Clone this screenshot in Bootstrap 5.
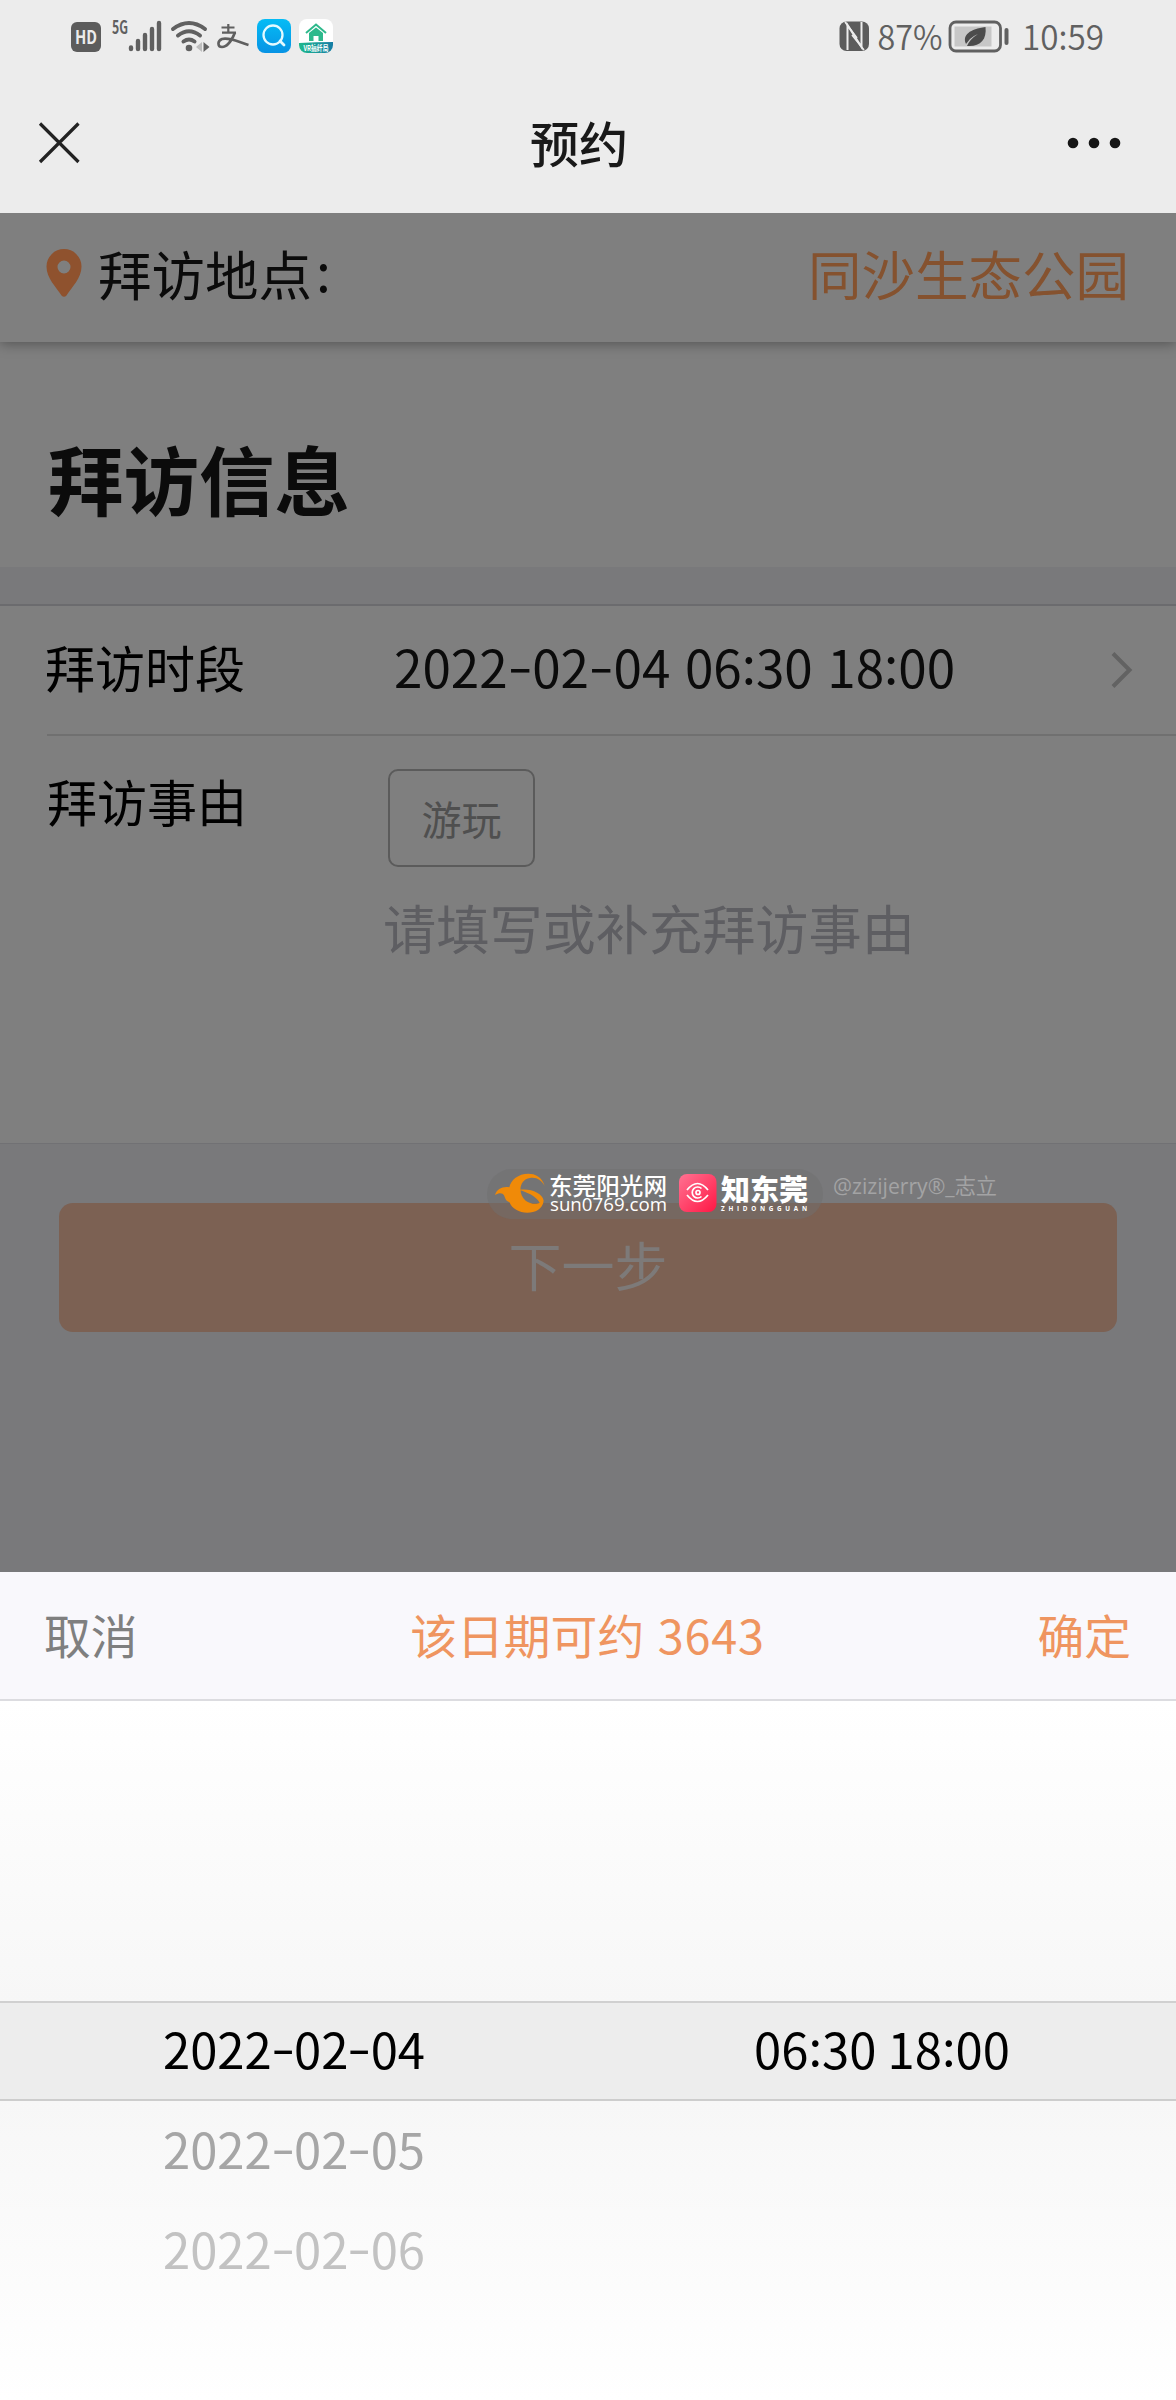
<!DOCTYPE html>
<html lang="zh-CN">
<head>
<meta charset="utf-8">
<meta name="viewport" content="width=device-width, initial-scale=1">
<title>预约</title>
<link rel="stylesheet" href="https://cdn.jsdelivr.net/npm/bootstrap@5.3.0/dist/css/bootstrap.min.css">
<style>
body{font-family:"Noto Sans CJK SC",sans-serif;color:#0b0b0b;background:#79797b;width:1176px;height:2400px;overflow:hidden;line-height:1}
.phone-status{height:72px;padding:0 71px 0 70px;color:#606060}
.app-head{height:141px;padding:0 55px 0 37px}
.top-area{background:#ececec;z-index:2}
.app-title{font-size:49px;font-weight:500;color:#191919;line-height:60px;padding:0 0 2px 10px}
.place-bar{height:129px;background:#7f7f7f;padding:0 47px 9px 46px;box-shadow:0 2px 12px rgba(0,0,0,.34);font-size:53.5px;z-index:1}
.place-name{color:#85522f}
.info-head{height:225px;background:#7f7f7f;padding:90px 0 0 48px;font-size:75.5px;font-weight:700;line-height:90px}
.gap-band{height:39px;border-bottom:2px solid #6b6b6e}
.form-zone{background:#7f7f7f;height:538px;border-bottom:1px solid #717174;font-size:50px}
.time-row{height:130px;margin-left:47px;border-bottom:2px solid #707070;padding-right:43px}
.label-col{width:346px;padding-bottom:9px}
.time-row .label-col{margin-left:-2px}
.value-txt{font-size:51.2px;word-spacing:3px;padding:0 0 6px 3px}
.reason-row{padding:33px 0 0 47px}
.reason-label{width:341px;line-height:62px}
.chip{width:147px;height:98px;border:2px solid #5b5b5b;border-radius:10px;font-size:40px;color:#4f4f4f}
.hint{font-size:53.2px;line-height:60px;margin:30px 0 0 -5px;color:#5e5e62}
.next-btn{height:129px;margin:59px 59px 0;border-radius:14px;background:#7c6153;color:#7d7a79;font-size:53px;width:1058px;border:0;padding:0 0 6px}
.sheet{top:1572px;left:0;width:1176px;height:828px;background:#fff}
.sheet-head{height:129px;background:#f9f8fc;border-bottom:2px solid #dcdce0;padding:0 45px 3px;font-size:46.8px;color:#ef9560}
.cancel{color:#7f7f7f;margin-left:-1px}
.digits{letter-spacing:.8px;margin-left:3px}
.wheel-top{height:300px;background:linear-gradient(#fff,#f7f7f7)}
.wheel-low{height:299px;background:linear-gradient(#f7f7f7,#fff)}
.wheel-row{height:100px;font-size:49px;color:#a6a6a6;padding-bottom:8px}
.wheel-row.far{color:#c2c2c2}
.wheel-row.picked{background:#ededed;border-top:2px solid #d0d0d0;border-bottom:2px solid #cdcdcd;color:#000}
.dash{display:inline-block;width:.48em;text-align:center;transform:translateY(-.06em) scaleX(1.4)}
.wheel-row .dash{width:.455em}
.cl{display:inline-block;transform:translateY(-.07em)}
.place-bar .cl{margin-left:4px}
.mark-pill{left:487px;top:1169px;width:336px;height:50px;border-radius:25px;background:rgba(112,112,112,.5)}
.user-mark{left:833px;top:1169px;font-family:"Open Sans","Noto Sans CJK SC",sans-serif;font-size:21.2px;line-height:34px;color:#a3a3a4;white-space:nowrap}
svg{display:block;flex:none;overflow:visible}
svg text{font-family:"Noto Sans CJK SC",sans-serif}
svg .latin{font-family:"Open Sans",sans-serif}
</style>
<script src="https://cdn.jsdelivr.net/npm/bootstrap@5.3.0/dist/js/bootstrap.bundle.min.js"></script>
</head>
<body class="position-relative">
<header class="top-area position-relative">
  <div class="phone-status d-flex align-items-center justify-content-between">
    <svg width="270" height="72" viewBox="70 0 270 72">
      <rect x="71" y="22" width="30" height="30" rx="6" fill="#5c5c5c"/>
      <text x="75" y="44" font-size="19" font-weight="700" textLength="22" lengthAdjust="spacingAndGlyphs" fill="#ececec">HD</text>
      <text x="112" y="34" font-size="18" font-weight="700" textLength="16" lengthAdjust="spacingAndGlyphs" fill="#606060">5G</text>
      <path d="M131 47.500V49M138 41V49M145 35V49M152 29V49M159 23V49" stroke="#606060" stroke-width="4.400" stroke-linecap="round"/>
      <g fill="none" stroke="#606060" stroke-width="4" stroke-linecap="round"><path d="M173 29Q189 17 205 29M178 35.500Q189 27 200 35.500M183.500 41.500Q189 37.500 194.500 41.500"/></g>
      <circle cx="189" cy="48" r="3.300" fill="#606060"/>
      <path d="M202 42v10l-6-5z" fill="#bdbdbd"/><path d="M203.500 42v10l6-5z" fill="#606060"/>
      <g fill="none" stroke="#606060"><path d="M221.500 27.500H234.500M228.300 24V32.500M222 32.700H236" stroke-width="2.200"/><path d="M235 32.500C232 40 227 47 222 47C217.500 47 217 41 222 39C230 37 238 42 248.500 45" stroke-width="2.600"/></g>
      <defs><linearGradient id="sky" x2="0" y2="1"><stop stop-color="#05bcf5"/><stop offset="1" stop-color="#0793e4"/></linearGradient><linearGradient id="vr"><stop stop-color="#20b98c"/><stop offset="1" stop-color="#157ca5"/></linearGradient></defs>
      <rect x="257" y="19" width="34" height="34" rx="8" fill="url(#sky)"/>
      <circle cx="273" cy="35" r="9.500" fill="none" stroke="#e4faff" stroke-width="2.300"/><path d="M280 41l4 4" stroke="#e4faff" stroke-width="2.800" stroke-linecap="round"/>
      <rect x="299" y="19" width="34" height="34" rx="8" fill="#fff"/>
      <path d="M299 43Q316 42 333 42V45a8 8 0 0 1-8 8H307a8 8 0 0 1-8-8Z" fill="url(#vr)"/>
      <path d="M306 33L316 24.500L326 33" fill="none" stroke="#2eb98c" stroke-width="2"/><path d="M309 33L316 27.500L323 33V41H318.500V36H313.500V41H309Z" fill="#2eb98c"/>
      <text x="303.500" y="51" font-size="7.500" font-weight="700" textLength="25" lengthAdjust="spacingAndGlyphs" fill="#fff">VR搞纤局</text>
    </svg>
    <svg width="270" height="72" viewBox="835 0 270 72">
      <rect x="839.500" y="21.500" width="29.500" height="29.500" rx="7" fill="#5c5c5c"/>
      <path d="M847.500 50V25L861.500 47V22" fill="none" stroke="#ececec" stroke-width="2"/><path d="M845 22L857 38M852 35L864 50" stroke="#ececec" stroke-width="1.600"/>
      <text x="877.500" y="50" font-size="34" font-weight="350" textLength="65" lengthAdjust="spacingAndGlyphs" fill="#606060">87%</text>
      <rect x="950" y="22" width="50.500" height="29" rx="6" fill="#ececec" stroke="#606060" stroke-width="2.800"/>
      <rect x="954.500" y="26.500" width="37" height="20" fill="#c7c7c7"/>
      <path d="M985.500 27C970 29 962 35 966 44L970 39Q973 36 978 34Q970 39 967 46C980 47 987 40 985.500 27Z" fill="#4c4c4c"/>
      <rect x="1004.500" y="28" width="4" height="17" rx="2" fill="#606060"/>
      <text x="1022" y="50" font-size="34" font-weight="350" textLength="82" lengthAdjust="spacingAndGlyphs" fill="#606060">10:59</text>
    </svg>
  </div>
  <nav class="app-head d-flex align-items-center justify-content-between">
    <svg width="44" height="44" viewBox="0 0 44 44"><path d="M3 2.500L41.500 41M41.500 2.500L3 41" stroke="#222" stroke-width="3.200"/></svg>
    <div class="app-title">预约</div>
    <svg width="54" height="12" viewBox="0 0 54 12" fill="#161616"><circle cx="6" cy="6" r="5.300"/><circle cx="27" cy="6" r="5.300"/><circle cx="48" cy="6" r="5.300"/></svg>
  </nav>
</header>
<main>
  <section class="place-bar d-flex align-items-center position-relative">
    <svg width="36" height="48" viewBox="0 0 36 48" class="me-3"><path fill-rule="evenodd" d="M18 0A17.500 17.500 0 0 0 .5 17.500C.5 29 10 38 15.500 46.500Q18 49 20.500 46.500C26 38 35.500 29 35.500 17.500A17.500 17.500 0 0 0 18 0ZM18 11.500a6.500 6.500 0 1 1 0 13a6.500 6.500 0 0 1 0-13Z" fill="#8f522e"/></svg>
    <span>拜访地点<span class="cl">:</span></span>
    <span class="place-name ms-auto">同沙生态公园</span>
  </section>
  <section class="info-head">拜访信息</section>
  <div class="gap-band"></div>
  <section class="form-zone">
    <div class="time-row d-flex align-items-center">
      <div class="label-col text-black">拜访时段</div>
      <div class="value-txt">2022<span class="dash">-</span>02<span class="dash">-</span>04 06<span class="cl">:</span>30 18<span class="cl">:</span>00</div>
      <svg class="ms-auto" width="22" height="36" viewBox="0 0 22 36"><path d="M2 1.500L18.500 18L2 34.500" fill="none" stroke="#626262" stroke-width="4"/></svg>
    </div>
    <div class="reason-row d-flex">
      <div class="reason-label text-black">拜访事由</div>
      <div>
        <div class="chip d-flex align-items-center justify-content-center">游玩</div>
        <div class="hint">请填写或补充拜访事由</div>
      </div>
    </div>
  </section>
  <button class="btn next-btn d-flex align-items-center justify-content-center">下一步</button>
</main>
<div class="mark-pill position-absolute">
  <svg width="336" height="50" viewBox="487 1169 336 50">
    <path transform="translate(480 1160) scale(.3333)" d="M194 78C186 50 165 41 145 41C115 41 92 60 88 82C70 78 50 86 45 105C60 96 68 100 72 106C78 122 80 124 88 126C95 146 118 158 142 158C165 158 188 148 191 122C188 100 150 84 118 90C140 96 168 108 179 128C170 134 150 132 137 122C112 100 118 58 150 54C170 51 184 60 194 78Z" fill="#f08a08"/>
    <text x="549" y="1195" font-size="23.500" font-weight="500" textLength="118" lengthAdjust="spacingAndGlyphs" fill="#fff">东莞阳光网</text>
    <text class="latin" x="550" y="1211" font-size="18.500" font-weight="500" textLength="117" lengthAdjust="spacingAndGlyphs" fill="#fff">sun0769.com</text>
    <defs><linearGradient id="rose" x2="1" y2="1"><stop stop-color="#ff7292"/><stop offset="1" stop-color="#ff1744"/></linearGradient></defs>
    <rect x="679" y="1174" width="37.500" height="38" rx="8" fill="url(#rose)"/>
    <g fill="none" stroke="#fff" stroke-width="1.700"><path d="M687 1190Q697.500 1177 708 1190M687 1195Q697.500 1208 708 1195M701.500 1188.500A5.500 5.500 0 1 0 701.500 1196.500"/><circle cx="698" cy="1192.500" r="2"/></g>
    <text x="721" y="1201" font-size="29" font-weight="900" textLength="87" lengthAdjust="spacingAndGlyphs" fill="#fff">知东莞</text>
    <text class="latin" x="721" y="1211" font-size="6.300" font-weight="700" textLength="86" fill="#fff">ZHIDONGGUAN</text>
  </svg>
</div>
<div class="user-mark position-absolute">@zizijerry®_志立</div>
<section class="sheet position-absolute">
  <div class="sheet-head d-flex align-items-center justify-content-between">
    <span class="cancel">取消</span><span>该日期可约 <span class="digits">3643</span></span><span>确定</span>
  </div>
  <div class="wheel-top"></div>
  <div class="wheel-row picked row g-0 align-items-center text-center">
    <div class="col-6">2022<span class="dash">-</span>02<span class="dash">-</span>04</div>
    <div class="col-6">06<span class="cl">:</span>30 18<span class="cl">:</span>00</div>
  </div>
  <div class="wheel-low">
    <div class="wheel-row row g-0 align-items-center text-center"><div class="col-6">2022<span class="dash">-</span>02<span class="dash">-</span>05</div></div>
    <div class="wheel-row far row g-0 align-items-center text-center"><div class="col-6">2022<span class="dash">-</span>02<span class="dash">-</span>06</div></div>
  </div>
</section>
</body>
</html>
